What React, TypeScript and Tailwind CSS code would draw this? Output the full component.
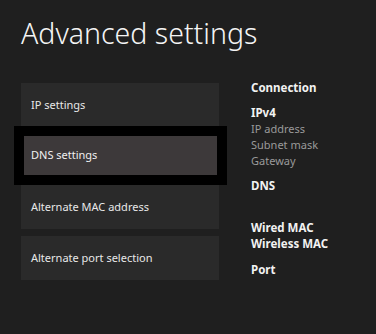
export default function App() {
  const items = ["IP settings", "DNS settings", "Alternate MAC address", "Alternate port selection"];
  const focused = 1;

  return (
    <div
      className="w-[376px] h-[334px] overflow-hidden bg-[#1f1f1f] text-white pl-[21px]"
      style={{ fontFamily: '"Noto Sans", "Open Sans", sans-serif' }}
    >
      <h1 className="pt-[14px] text-[28.5px] leading-[39px] font-light text-[#f4f4f4]">
        Advanced settings
      </h1>
      <div className="flex mt-[30px]">
        <div className="flex flex-col gap-[7px] w-[198px]">
          {items.map((item, i) =>
            i === focused ? (
              <div key={item} className="h-[44px] flex pl-[3px] pr-[2px] pt-[2px] pb-[3px]">
                <div className="flex-1 flex items-center pl-[7px] bg-[#3d393a] ring-[10px] ring-black text-[11px] text-[#f0f0f0]">
                  {item}
                </div>
              </div>
            ) : (
              <div
                key={item}
                className="h-[44px] flex items-center pl-[10px] bg-[#2a2a2a] text-[11px] text-[#e8e8e8]"
              >
                {item}
              </div>
            )
          )}
        </div>
        <div className="ml-[32px] flex flex-col text-[11px] leading-[16px] -mt-[3px]">
          <div className="font-bold text-[11.5px] text-[#f2f2f2]">Connection</div>
          <div className="font-bold text-[11.5px] text-[#f2f2f2] mt-[9px]">IPv4</div>
          <div className="text-[#9a9a9a]">IP address</div>
          <div className="text-[#9a9a9a]">Subnet mask</div>
          <div className="text-[#9a9a9a]">Gateway</div>
          <div className="font-bold text-[11.5px] text-[#f2f2f2] mt-[9px]">DNS</div>
          <div className="font-bold text-[11.5px] text-[#f2f2f2] mt-[26px]">Wired MAC</div>
          <div className="font-bold text-[11.5px] text-[#f2f2f2]">Wireless MAC</div>
          <div className="font-bold text-[11.5px] text-[#f2f2f2] mt-[10px]">Port</div>
        </div>
      </div>
    </div>
  );
}
